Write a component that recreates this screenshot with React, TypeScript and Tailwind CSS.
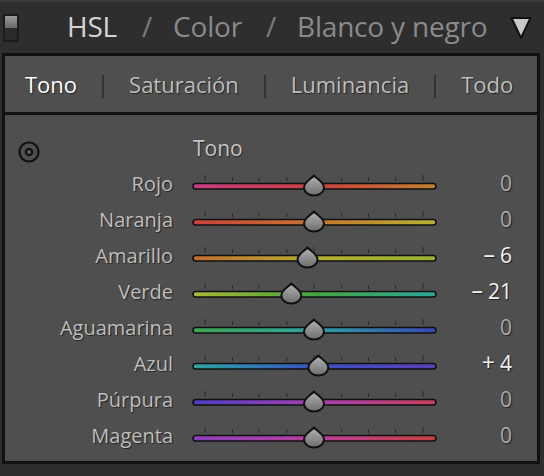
import React from "react";

type Row = {
  label: string;
  value: number;
  colors: [string, string, string];
};

const rows: Row[] = [
  { label: "Rojo", value: 0, colors: ["#c23f86", "#c9403f", "#c2812f"] },
  { label: "Naranja", value: 0, colors: ["#c9423c", "#c6762f", "#b7b132"] },
  { label: "Amarillo", value: -6, colors: ["#c46d30", "#b5ae32", "#97b232"] },
  { label: "Verde", value: -21, colors: ["#abb833", "#43a542", "#2fa598"] },
  { label: "Aguamarina", value: 0, colors: ["#3fa552", "#2ea2a0", "#3a46b4"] },
  { label: "Azul", value: 4, colors: ["#2fa3a0", "#3a52c0", "#5a3fb6"] },
  { label: "Púrpura", value: 0, colors: ["#4a3fbc", "#a540b4", "#c4405a"] },
  { label: "Magenta", value: 0, colors: ["#8a40bc", "#b83f9e", "#c6403e"] },
];

const ticks = [15, 42.5, 69, 97, 124, 151.5, 178.5, 205.5, 233];

// sign and number are split so the gap between them matches Lightroom
const Value = ({ v }: { v: number }) => {
  if (v === 0) return <span>0</span>;
  return (
    <span className="inline-flex items-baseline">
      <span className="text-[23px] leading-none">{v < 0 ? "–" : "+"}</span>
      <span className="ml-[5px]">{Math.abs(v)}</span>
    </span>
  );
};

const Slider = ({ row, idx }: { row: Row; idx: number }) => {
  const cx = 124 + row.value * 1.08;
  return (
    <svg width="252" height="36" viewBox="0 0 252 36" className="ml-[17px] shrink-0">
      <defs>
        <linearGradient id={`track-${idx}`} x1="0" x2="1" y1="0" y2="0">
          <stop offset="0" stopColor={row.colors[0]} />
          <stop offset="0.5" stopColor={row.colors[1]} />
          <stop offset="1" stopColor={row.colors[2]} />
        </linearGradient>
        <linearGradient id={`thumb-${idx}`} x1="0" x2="0" y1="0" y2="1">
          <stop offset="0" stopColor="#b4b4b4" />
          <stop offset="1" stopColor="#6c6c6c" />
        </linearGradient>
      </defs>
      {ticks.map((t, i) => {
        const tall = i === 0 || i === 4 || i === ticks.length - 1;
        return (
          <line key={t} x1={t} x2={t} y1={tall ? 9 : 11.5} y2={15} stroke="#2a2a2a" strokeWidth="1" />
        );
      })}
      <rect x="3" y="17.5" width="243" height="5.5" rx="2.75" fill={`url(#track-${idx})`} stroke="#111" strokeWidth="1.6" />
      <path
        transform={`translate(${cx} 20)`}
        d="M 0 -10.5 C 3 -7, 10 -4, 10 1.5 A 10 8 0 0 1 -10 1.5 C -10 -4, -3 -7, 0 -10.5 Z"
        fill={`url(#thumb-${idx})`}
        stroke="#111"
        strokeWidth="2"
        strokeLinejoin="round"
      />
    </svg>
  );
};

const App = () => {
  return (
    <div className="w-[544px] h-[476px] overflow-hidden bg-[#2e2e2e] font-['Open_Sans',sans-serif]">
      {/* header */}
      <div className="h-[53px] flex items-center border-t-2 border-[#3a3a3a]">
        <div className="ml-[3px] w-[16px] h-[28px] border-2 border-[#1c1c1c] flex flex-col">
          <div className="h-1/2 bg-gradient-to-b from-[#9a9a9a] to-[#6a6a6a]" />
          <div className="h-1/2 bg-[#2a2a2a]" />
        </div>
        <div className="ml-[48px] flex items-center text-[28px] leading-none tracking-[-0.2px] pb-[3px]">
          <span className="text-[#d4d4d4]">HSL</span>
          <span className="text-[#7c7c7c] ml-[25px]">/</span>
          <span className="text-[#8a8a8a] ml-[21px]">Color</span>
          <span className="text-[#7c7c7c] ml-[24px]">/</span>
          <span className="text-[#8a8a8a] ml-[21px]">Blanco y negro</span>
        </div>
        <svg width="22" height="24" viewBox="0 0 22 24" className="ml-auto mr-[12px]">
          <path d="M 1.5 2 L 20.5 2 L 11 22 Z" fill="#c9c9c9" stroke="#111" strokeWidth="2" strokeLinejoin="round" />
        </svg>
      </div>

      {/* panel */}
      <div className="mx-[2px] w-[538px] border-[3px] border-[#111] bg-[#4f4f4f]">
        <div className="h-[59px] flex items-center pl-[20px] gap-[25px] text-[22px] text-[#bdbdbd] [text-shadow:1px_1px_1px_rgba(0,0,0,0.55)] border-b-[3px] border-[#111]">
          <span className="text-white">Tono</span>
          <span className="w-[2px] h-[23px] bg-[#333] mt-[5px]" />
          <span>Saturación</span>
          <span className="w-[2px] h-[23px] bg-[#333] mt-[5px]" />
          <span>Luminancia</span>
          <span className="w-[2px] h-[23px] bg-[#333] mt-[5px]" />
          <span>Todo</span>
        </div>

        <div className="pb-[7px]">
          <div className="h-[51px] pt-[16px] flex items-center">
            <svg width="24" height="24" viewBox="0 0 24 24" className="ml-[12px] mt-[6px]">
              <circle cx="12" cy="12" r="9.5" fill="none" stroke="#111" strokeWidth="2.2" />
              <circle cx="12" cy="12" r="3.2" fill="#5a5a5a" stroke="#111" strokeWidth="2.2" />
            </svg>
            <span className="ml-[152px] text-[21px] text-[#c6c6c6] [text-shadow:1px_1px_1px_rgba(0,0,0,0.5)]">Tono</span>
          </div>
          {rows.map((row, idx) => (
            <div key={row.label} className="h-[36px] flex items-center">
              <div className="w-[168px] text-right text-[20px] text-[#bdbdbd] [text-shadow:1px_1px_1px_rgba(0,0,0,0.55)]">
                {row.label}
              </div>
              <Slider row={row} idx={idx} />
              <div
                className={`flex-1 text-right pr-[25px] text-[21px] [text-shadow:1px_1px_1px_rgba(0,0,0,0.6)] ${
                  row.value === 0 ? "text-[#a9a9a9]" : "text-[#f2f2f2]"
                }`}
              >
                <Value v={row.value} />
              </div>
            </div>
          ))}
        </div>
      </div>
    </div>
  );
};

export default App;
